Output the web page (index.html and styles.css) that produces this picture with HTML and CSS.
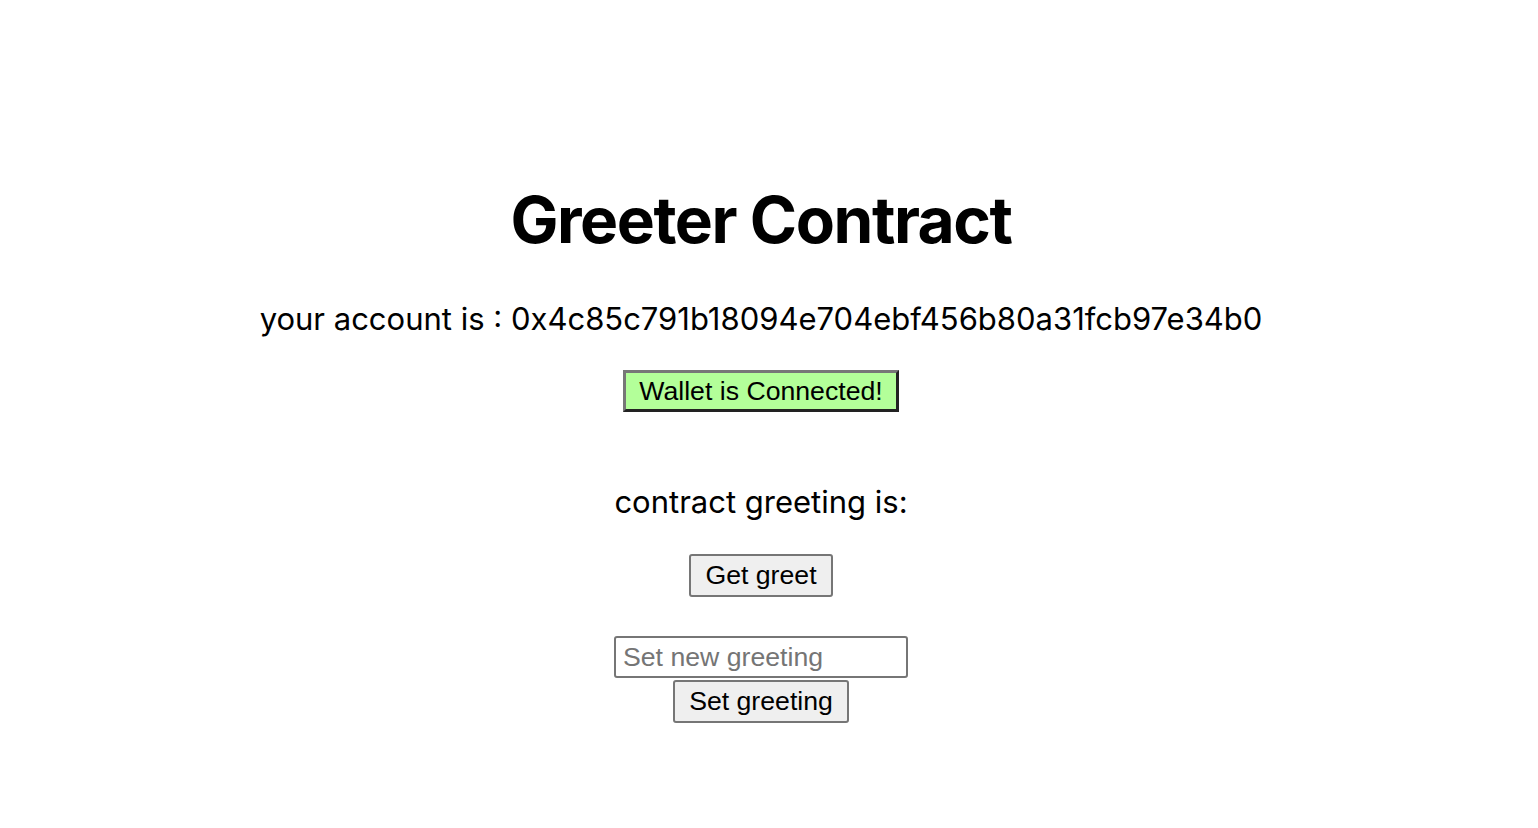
FILE: index.html
```html
<!DOCTYPE html>
<html>
<head>
<meta charset="utf-8">
<link rel="stylesheet" href="styles.css">
</head>
<body>
<main class="app">
  <h1 class="title">Greeter Contract</h1>
  <p class="account">your account is : 0x4c85c791b18094e704ebf456b80a31fcb97e34b0</p>
  <button class="wallet">Wallet is Connected!</button>
  <p class="greeting">contract greeting is:</p>
  <button class="btn get">Get greet</button>
  <div class="setter">
    <input class="field" type="text" placeholder="Set new greeting">
    <button class="btn set">Set greeting</button>
  </div>
</main>
</body>
</html>
```

FILE: styles.css
```css
html, body { margin: 0; padding: 0; background: #fff; }
.app {
  display: flex;
  flex-direction: column;
  align-items: center;
  padding-top: 184px;
  padding-right: 16px;
  font-family: Inter, "Liberation Sans", sans-serif;
  color: #000;
}
.title {
  margin: 0;
  font-size: 64px;
  font-weight: 700;
  line-height: 72px;
  letter-spacing: -1.45px;
}
.account {
  margin: 43px 0 0;
  font-size: 31px;
  line-height: 40px;
}
.wallet {
  margin-top: 31px;
  font-family: "Liberation Sans", Arial, sans-serif;
  font-size: 26.67px;
  height: 42px;
  padding: 0 13px;
  background: #b3ff99;
  border: 3px solid;
  border-color: #777 #222 #222 #777;
  color: #000;
}
.greeting {
  margin: 70px 0 0;
  font-size: 31px;
  line-height: 40px;
}
.btn {
  font-family: "Liberation Sans", Arial, sans-serif;
  font-size: 26.67px;
  height: 43px;
  padding: 0 14px;
  background: #efefef;
  border: 2px solid #767676;
  border-radius: 3px;
  color: #000;
}
.get { margin-top: 32px; }
.setter {
  margin-top: 39px;
  display: flex;
  flex-direction: column;
  align-items: center;
  gap: 2px;
}
.field {
  width: 294px;
  height: 42px;
  box-sizing: border-box;
  font-family: "Liberation Sans", Arial, sans-serif;
  font-size: 26.67px;
  padding: 0 7px;
  border: 2px solid #767676;
  border-radius: 3px;
}
.field::placeholder { color: #757575; }
```
